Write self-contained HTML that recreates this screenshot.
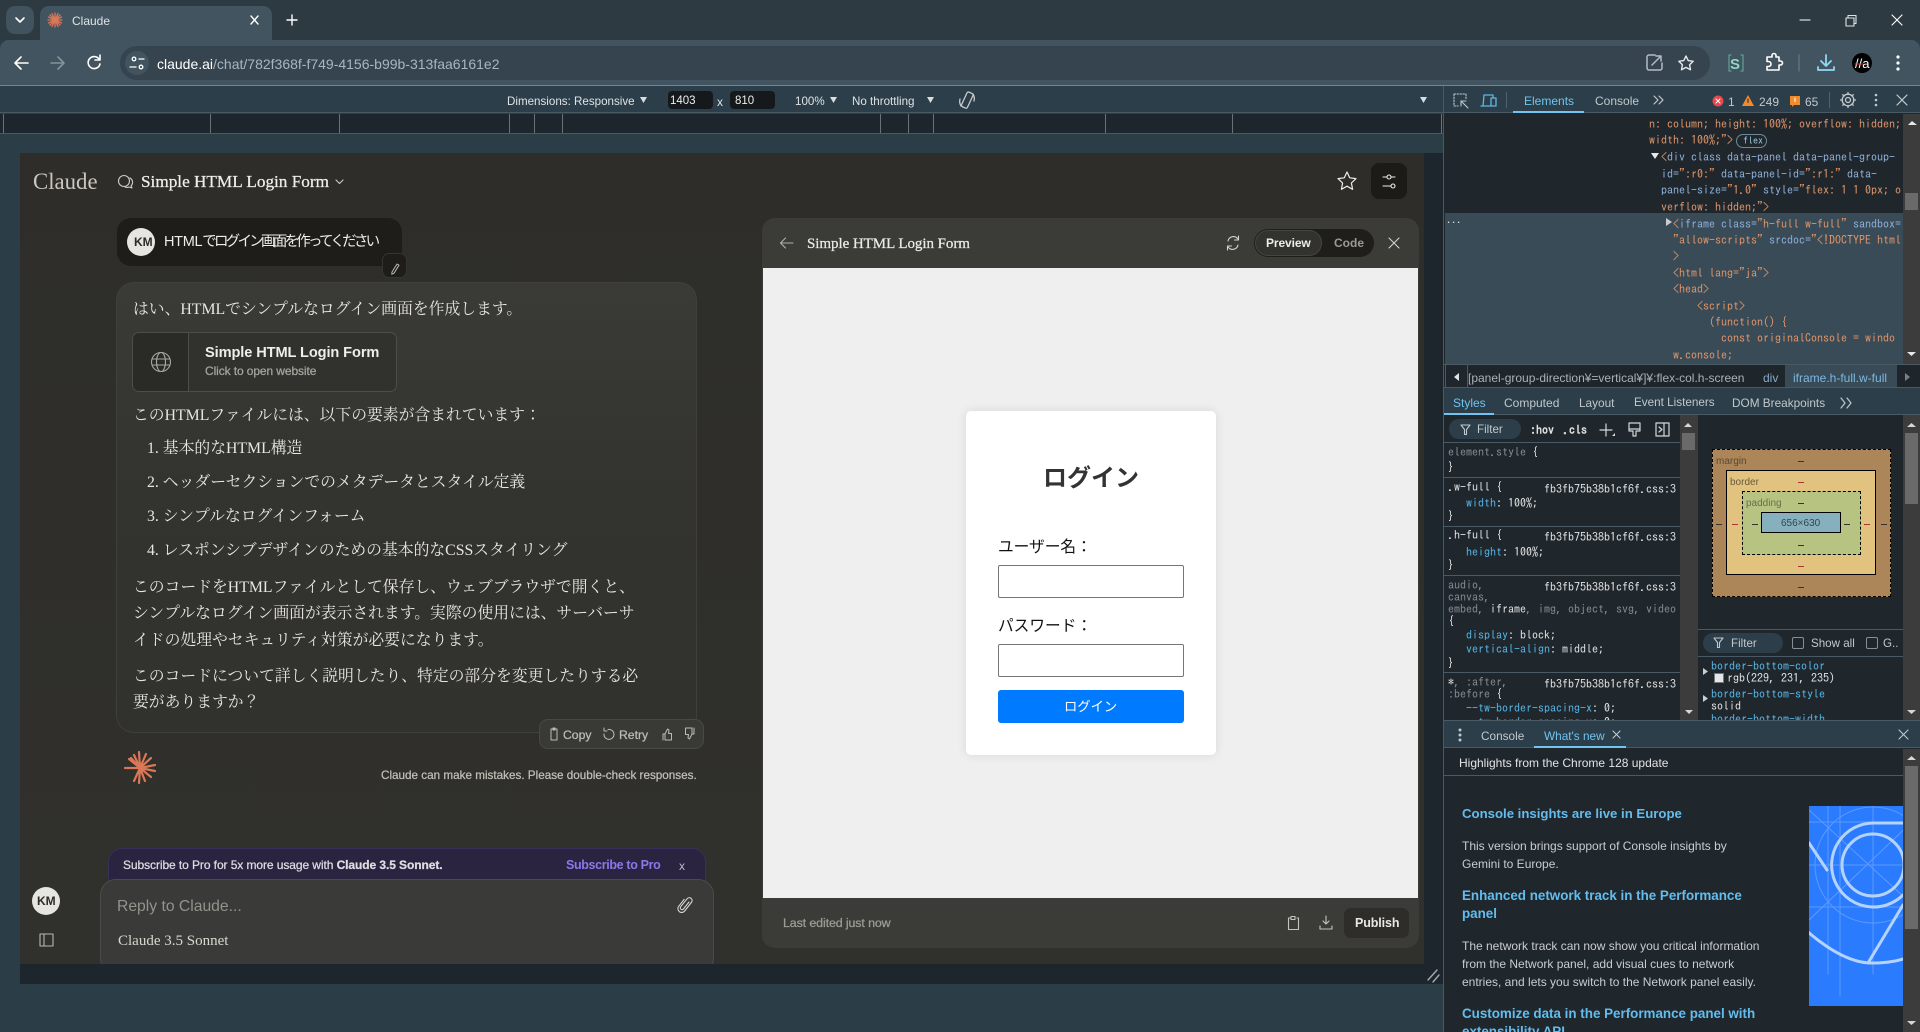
<!DOCTYPE html>
<html lang="ja"><head><meta charset="utf-8"><title>Claude</title>
<style>
html,body{margin:0;padding:0;width:1920px;height:1032px;overflow:hidden;background:#2b3d47}
body{position:relative;font-family:"Liberation Sans","Noto Sans CJK JP",sans-serif;color:#ddd}
.b{position:absolute;box-sizing:border-box}
.t{position:absolute;white-space:nowrap;line-height:0;font-size:12px;color:#dfe3e6}
.m{font-family:"IPAGothic","Liberation Mono",monospace;font-size:12px}
.o{color:#e0956a}.u{color:#8fb0dc}.g{color:#868d92}.w{color:#e4e4e4}.p{color:#56b6e8}
.s{font-family:"Liberation Serif","Noto Serif CJK SC","Noto Serif CJK JP",serif;color:#e8e6df}
.c{font-size:15.8px}
.h{font-size:13.4px;font-weight:bold;color:#62bdee}
.d{font-size:12px;color:#c9cccf}
.x{-webkit-text-stroke:.25px currentColor}
</style></head><body>

<!-- chrome -->
<div class="b" style="left:0;top:0;width:1920px;height:40px;background:#2e3a42"></div>
<div class="b" style="left:6px;top:6px;width:28px;height:28px;border-radius:9px;background:#41535e"></div>
<div class="b" style="left:40px;top:6px;width:232px;height:36px;border-radius:9px 9px 0 0;background:#42545f"></div>
<div class="t" style="left:72px;top:21px;font-size:12px">Claude</div>
<div class="b" style="left:0;top:40px;width:1920px;height:46px;background:#42545f;border-radius:9px 9px 0 0"></div>
<div class="b" style="left:0;top:85px;width:1920px;height:1px;background:#75858f"></div>
<div class="b" style="left:120px;top:46px;width:1590px;height:34px;border-radius:17px;background:#35444e"></div>
<div class="b" style="left:125px;top:51px;width:24px;height:24px;border-radius:12px;background:#42545f"></div>
<div class="t" style="left:157px;top:64px;font-size:14px;color:#a9b6be"><span style="color:#fff">claude.ai</span>/chat/782f368f-f749-4156-b99b-313faa6161e2</div>

<!-- device toolbar -->
<div class="b" style="left:0;top:86px;width:1444px;height:27px;background:#2b3e49;border-bottom:1px solid #4a5a64"></div>
<div class="t" style="left:507px;top:102px;font-size:11.6px">Dimensions: Responsive</div>
<div class="b" style="left:668px;top:91px;width:45px;height:18px;background:#15191c;border-radius:4px"></div>
<div class="t" style="left:670px;top:101px;font-size:11.5px;color:#eee">1403</div>
<div class="t" style="left:717px;top:102px;font-size:12px">x</div>
<div class="b" style="left:730px;top:91px;width:45px;height:18px;background:#15191c;border-radius:4px"></div>
<div class="t" style="left:735px;top:101px;font-size:11.5px;color:#eee">810</div>
<div class="t" style="left:795px;top:102px;font-size:11.6px">100%</div>
<div class="t" style="left:852px;top:102px;font-size:11.6px">No throttling</div>

<!-- ruler -->
<div class="b" style="left:0;top:114px;width:1443px;height:20px;background:#1e262d;border-bottom:1px solid #4a5a64"></div>
<div class="b" style="left:3px;top:114px;width:1px;height:19px;background:#6a7278"></div>
<div class="b" style="left:210px;top:114px;width:1px;height:19px;background:#6a7278"></div>
<div class="b" style="left:339px;top:114px;width:1px;height:19px;background:#6a7278"></div>
<div class="b" style="left:509px;top:114px;width:1px;height:19px;background:#6a7278"></div>
<div class="b" style="left:534px;top:114px;width:1px;height:19px;background:#6a7278"></div>
<div class="b" style="left:562px;top:114px;width:1px;height:19px;background:#6a7278"></div>
<div class="b" style="left:880px;top:114px;width:1px;height:19px;background:#6a7278"></div>
<div class="b" style="left:908px;top:114px;width:1px;height:19px;background:#6a7278"></div>
<div class="b" style="left:933px;top:114px;width:1px;height:19px;background:#6a7278"></div>
<div class="b" style="left:1105px;top:114px;width:1px;height:19px;background:#6a7278"></div>
<div class="b" style="left:1232px;top:114px;width:1px;height:19px;background:#6a7278"></div>
<div class="b" style="left:1441px;top:114px;width:1px;height:19px;background:#6a7278"></div>

<!-- emulated page gutters -->
<div class="b" style="left:1424px;top:153px;width:19px;height:831px;background:#1e262d"></div>
<div class="b" style="left:20px;top:964px;width:1423px;height:20px;background:#1e262d"></div>
<div class="b" style="left:709px;top:974px;width:26px;height:2px;background:#a7abae"></div>
<div class="b" style="left:709px;top:978px;width:26px;height:2px;background:#a7abae"></div>

<!-- Claude page -->
<div class="b" style="left:20px;top:153px;width:1404px;height:811px;background:linear-gradient(#2e2d29,#30302c)"></div>
<div class="t s" style="left:33px;top:182px;font-size:22.8px;color:#c9c7bf">Claude</div>
<div class="t s x" style="left:141px;top:182px;font-size:17.2px;color:#efeee9">Simple HTML Login Form</div>
<div class="b" style="left:1371px;top:163px;width:36px;height:36px;border-radius:8px;background:#1c1b17"></div>

<!-- user bubble -->
<div class="b" style="left:117px;top:218px;width:285px;height:48px;border-radius:14px;background:#1e1d19"></div>
<div class="b" style="left:127px;top:228px;width:28px;height:28px;border-radius:14px;background:#e6e5df"></div>
<div class="t" style="left:134px;top:242px;font-size:12px;font-weight:bold;color:#2b2b28">KM</div>
<div class="t" style="left:164px;top:242px;font-size:14.5px;letter-spacing:-2.75px;color:#eeede8"><span style="letter-spacing:-.3px">HTML</span>でログイン画面を作ってください</div>
<div class="b" style="left:382px;top:253px;width:25px;height:25px;border-radius:7px;background:#1e1d19;border:1px solid #35342f"></div>

<!-- assistant bubble -->
<div class="b" style="left:116px;top:282px;width:581px;height:451px;border-radius:18px;background:linear-gradient(#3a3a37,#33332f 45%,#31312d);border:1px solid #3f3f3b"></div>
<div class="t s c" style="left:133px;top:310px">はい、HTMLでシンプルなログイン画面を作成します。</div>
<div class="b" style="left:132px;top:332px;width:265px;height:60px;border-radius:7px;background:#31312d;border:1px solid #4e4e49"></div>
<div class="b" style="left:133px;top:333px;width:56px;height:58px;border-radius:6px 0 0 6px;background:#2a2a26;border-right:1px solid #4e4e49"></div>
<div class="t" style="left:205px;top:353px;font-size:14.6px;font-weight:bold;letter-spacing:-.1px;color:#efeee9">Simple HTML Login Form</div>
<div class="t x" style="left:205px;top:371px;font-size:12px;letter-spacing:-.1px;color:#a6a59d">Click to open website</div>
<div class="t s c" style="left:133px;top:416px">このHTMLファイルには、以下の要素が含まれています：</div>
<div class="t s c" style="left:147px;top:449px">1. 基本的なHTML構造</div>
<div class="t s c" style="left:147px;top:483px">2. ヘッダーセクションでのメタデータとスタイル定義</div>
<div class="t s c" style="left:147px;top:517px">3. シンプルなログインフォーム</div>
<div class="t s c" style="left:147px;top:551px">4. レスポンシブデザインのための基本的なCSSスタイリング</div>
<div class="t s c" style="left:133px;top:588px">このコードをHTMLファイルとして保存し、ウェブブラウザで開くと、</div>
<div class="t s c" style="left:133px;top:614px">シンプルなログイン画面が表示されます。実際の使用には、サーバーサ</div>
<div class="t s c" style="left:133px;top:641px">イドの処理やセキュリティ対策が必要になります。</div>
<div class="t s c" style="left:133px;top:677px">このコードについて詳しく説明したり、特定の部分を変更したりする必</div>
<div class="t s c" style="left:133px;top:703px">要がありますか？</div>

<!-- copy bar -->
<div class="b" style="left:539px;top:719px;width:165px;height:30px;border-radius:9px;background:#393936;border:1px solid #484844"></div>
<div class="t x" style="left:563px;top:735px;font-size:12.2px;color:#bdbcb4">Copy</div>
<div class="t x" style="left:619px;top:735px;font-size:12.2px;color:#bdbcb4">Retry</div>
<div class="t x" style="left:381px;top:776px;font-size:11.7px;color:#c0bfb7">Claude can make mistakes. Please double-check responses.</div>

<!-- subscribe -->
<div class="b" style="left:108px;top:848px;width:598px;height:50px;border-radius:14px 14px 0 0;background:#2a2441;border:1px solid #37315a"></div>
<div class="t x" style="left:123px;top:865px;font-size:12px;letter-spacing:-.08px;color:#dedde2">Subscribe to Pro for 5x more usage with <b>Claude 3.5 Sonnet.</b></div>
<div class="t" style="left:566px;top:865px;font-size:12.5px;font-weight:bold;letter-spacing:-.35px;color:#8a78ea">Subscribe to Pro</div>
<div class="t" style="left:679px;top:866px;font-size:12px;color:#bdbcc5">x</div>

<!-- input -->
<div class="b" style="left:100px;top:879px;width:614px;height:95px;border-radius:16px;background:#3a3a38;border:1px solid #4b4b47"></div>
<div class="b" style="left:20px;top:964px;width:1404px;height:20px;background:#1e262d"></div>
<div class="t" style="left:117px;top:907px;font-size:15.7px;color:#93938c">Reply to Claude...</div>
<div class="t s" style="left:118px;top:941px;font-size:15px;color:#d8d7cf">Claude 3.5 Sonnet</div>
<div class="b" style="left:32px;top:887px;width:28px;height:28px;border-radius:14px;background:#e6e5df"></div>
<div class="t" style="left:37px;top:901px;font-size:12px;font-weight:bold;color:#2b2b28">KM</div>

<!-- artifact panel -->
<div class="b" style="left:762px;top:218px;width:657px;height:730px;border-radius:13px;background:#3b3b38"></div>
<div class="b" style="left:763px;top:268px;width:655px;height:630px;background:#efefef"></div>
<div class="t s x" style="left:807px;top:244px;font-size:15px;letter-spacing:-.05px;color:#ecebe5">Simple HTML Login Form</div>
<div class="b" style="left:1254px;top:229px;width:120px;height:28px;border-radius:14px;background:#1f1e1a"></div>
<div class="b" style="left:1255px;top:230px;width:67px;height:26px;border-radius:13px;background:#32322e;border:1px solid #45453f"></div>
<div class="t" style="left:1266px;top:243px;font-size:12px;font-weight:bold;letter-spacing:-.1px;color:#eeede7">Preview</div>
<div class="t" style="left:1334px;top:243px;font-size:12px;font-weight:bold;color:#9b9a92">Code</div>
<div class="t x" style="left:783px;top:923px;font-size:12.4px;color:#9e9d95;letter-spacing:-.1px">Last edited just now</div>
<div class="b" style="left:1344px;top:908px;width:65px;height:30px;border-radius:7px;background:#2e2d2a"></div>
<div class="t" style="left:1355px;top:923px;font-size:12.5px;font-weight:bold;color:#e9e8e2;letter-spacing:-.1px">Publish</div>

<!-- login -->
<div class="b" style="left:966px;top:411px;width:250px;height:344px;border-radius:5px;background:#fff;box-shadow:0 0 10px rgba(0,0,0,.1)"></div>
<div class="t" style="left:1043px;top:479px;font-size:24px;font-weight:bold;color:#333">ログイン</div>
<div class="t" style="left:998px;top:548px;font-size:15.7px;color:#111">ユーザー名：</div>
<div class="b" style="left:998px;top:565px;width:186px;height:33px;border:1px solid #767676;border-radius:2px;background:#fff"></div>
<div class="t" style="left:998px;top:627px;font-size:15.7px;color:#111">パスワード：</div>
<div class="b" style="left:998px;top:644px;width:186px;height:33px;border:1px solid #767676;border-radius:2px;background:#fff"></div>
<div class="b" style="left:998px;top:690px;width:186px;height:33px;border-radius:3px;background:#007bff"></div>
<div class="t" style="left:1064px;top:707px;font-size:13.3px;color:#fff">ログイン</div>

<!-- devtools frame -->
<div class="b" style="left:1443px;top:86px;width:477px;height:946px;background:#20272c;border-left:1px solid #4a5a64"></div>
<div class="b" style="left:1444px;top:86px;width:476px;height:27px;background:#2b3e49;border-bottom:1px solid #4a5a64"></div>
<div class="b" style="left:1506px;top:92px;width:1px;height:16px;background:#52616b"></div>
<div class="b" style="left:1829px;top:92px;width:1px;height:16px;background:#52616b"></div>
<div class="t" style="left:1524px;top:101px;font-size:12px;color:#70c4ef">Elements</div>
<div class="b" style="left:1513px;top:111px;width:71px;height:2px;background:#70c4ef"></div>
<div class="t" style="left:1595px;top:101px;font-size:12px;color:#c2c8cc">Console</div>
<div class="t" style="left:1728px;top:102px;font-size:12px;color:#c2c8cc">1</div>
<div class="t" style="left:1759px;top:102px;font-size:12px;color:#c2c8cc">249</div>
<div class="t" style="left:1805px;top:102px;font-size:12px;color:#c2c8cc">65</div>

<!-- elements tree -->
<div class="b" style="left:1445px;top:213px;width:458px;height:151px;background:#394b56"></div>
<div class="b" style="left:1903px;top:114px;width:17px;height:251px;background:#3c3c3c"></div>
<div class="b" style="left:1905px;top:193px;width:13px;height:17px;background:#6a6a6a"></div>
<div class="t m o" style="left:1649px;top:124px">n: column; height: 100%; overflow: hidden;</div>
<div class="t m o" style="left:1649px;top:140px">width: 100%;"&gt;</div>
<div class="b" style="left:1736px;top:134px;width:31px;height:14px;border:1px solid #6e8a99;border-radius:7px"></div>
<div class="t m" style="left:1743px;top:141px;font-size:10px;color:#9fc5dc">flex</div>
<div class="t m u" style="left:1661px;top:157px"><span class="o">&lt;</span>div class data-panel data-panel-group-</div>
<div class="t m u" style="left:1661px;top:174px">id=<span class="o">":r0:"</span> data-panel-id=<span class="o">":r1:"</span> data-</div>
<div class="t m u" style="left:1661px;top:190px">panel-size=<span class="o">"1.0"</span> style=<span class="o">"flex: 1 1 0px; o</span></div>
<div class="t m o" style="left:1661px;top:207px">verflow: hidden;"&gt;</div>
<div class="t m" style="left:1447px;top:220px;color:#ddd;font-size:10px">...</div>
<div class="t m u" style="left:1673px;top:224px"><span class="o">&lt;</span>iframe class=<span class="o">"h-full w-full"</span> sandbox=</div>
<div class="t m o" style="left:1673px;top:240px">"allow-scripts" <span class="u">srcdoc=</span>"&lt;!DOCTYPE html</div>
<div class="t m o" style="left:1673px;top:256px">&gt;</div>
<div class="t m o" style="left:1673px;top:273px">&lt;html lang="ja"&gt;</div>
<div class="t m o" style="left:1673px;top:289px">&lt;head&gt;</div>
<div class="t m o" style="left:1697px;top:306px">&lt;script&gt;</div>
<div class="t m o" style="left:1709px;top:322px">(function() {</div>
<div class="t m o" style="left:1721px;top:338px">const originalConsole = windo</div>
<div class="t m o" style="left:1673px;top:355px">w.console;</div>

<!-- breadcrumb -->
<div class="b" style="left:1444px;top:364px;width:476px;height:24px;background:#1f262b;border-top:1px solid #4a5a64;border-bottom:1px solid #4a5a64"></div>
<div class="b" style="left:1445px;top:365px;width:23px;height:22px;background:#20272c;border-right:1px solid #4a5a64;border-left:1px solid #4a5a64"></div>
<div class="b" style="left:1785px;top:365px;width:112px;height:22px;background:#394b56"></div>
<div class="t" style="left:1468px;top:378px;font-size:12px;color:#aab2b7">[panel-group-direction¥=vertical¥]¥:flex-col.h-screen</div>
<div class="t" style="left:1763px;top:378px;font-size:12px;color:#86a9cc">div</div>
<div class="t" style="left:1793px;top:378px;font-size:12px;color:#7cb8e4">iframe.h-full.w-full</div>

<!-- styles tabs -->
<div class="b" style="left:1444px;top:388px;width:476px;height:27px;background:#2b3e49;border-bottom:1px solid #4a5a64"></div>
<div class="t" style="left:1453px;top:403px;color:#70c4ef;font-size:12px">Styles</div>
<div class="b" style="left:1444px;top:413px;width:50px;height:2px;background:#70c4ef"></div>
<div class="t" style="left:1504px;top:403px;font-size:12px;color:#c2c8cc">Computed</div>
<div class="t" style="left:1579px;top:403px;font-size:11.8px;color:#c2c8cc">Layout</div>
<div class="t" style="left:1634px;top:403px;font-size:11.7px;color:#c2c8cc">Event Listeners</div>
<div class="t" style="left:1732px;top:403px;font-size:11.8px;color:#c2c8cc">DOM Breakpoints</div>

<!-- filter -->
<div class="b" style="left:1449px;top:419px;width:72px;height:20px;border-radius:10px;background:#2b3e49"></div>
<div class="t" style="left:1477px;top:430px;font-size:11.6px;color:#c2c8cc">Filter</div>
<div class="t m" style="left:1530px;top:430px;color:#e0e0e0;font-weight:bold">:hov</div>
<div class="t m" style="left:1563px;top:430px;color:#e0e0e0;font-weight:bold">.cls</div>

<!-- styles pane -->
<div class="b" style="left:0;top:0;width:1698px;height:720px;overflow:hidden">
<div class="b" style="left:1444px;top:442px;width:236px;height:1px;background:#4a5a64"></div>
<div class="b" style="left:1444px;top:477px;width:236px;height:1px;background:#4a5a64"></div>
<div class="b" style="left:1444px;top:526px;width:236px;height:1px;background:#4a5a64"></div>
<div class="b" style="left:1444px;top:575px;width:236px;height:1px;background:#4a5a64"></div>
<div class="b" style="left:1444px;top:672px;width:236px;height:1px;background:#4a5a64"></div>
<div class="t m g" style="left:1448px;top:452px">element.style <span class="w">{</span></div>
<div class="t m w" style="left:1448px;top:467px">}</div>
<div class="t m w" style="left:1448px;top:487px">.w-full {</div>
<div class="t m w" style="left:1544px;top:489px">fb3fb75b38b1cf6f.css:3</div>
<div class="t m p" style="left:1466px;top:503px">width<span class="w">: 100%;</span></div>
<div class="t m w" style="left:1448px;top:516px">}</div>
<div class="t m w" style="left:1448px;top:535px">.h-full {</div>
<div class="t m w" style="left:1544px;top:537px">fb3fb75b38b1cf6f.css:3</div>
<div class="t m p" style="left:1466px;top:552px">height<span class="w">: 100%;</span></div>
<div class="t m w" style="left:1448px;top:565px">}</div>
<div class="t m g" style="left:1448px;top:585px">audio,</div>
<div class="t m w" style="left:1544px;top:587px">fb3fb75b38b1cf6f.css:3</div>
<div class="t m g" style="left:1448px;top:597px">canvas,</div>
<div class="t m g" style="left:1448px;top:609px">embed, <span class="w">iframe</span>, img, object, svg, video</div>
<div class="t m w" style="left:1448px;top:621px">{</div>
<div class="t m p" style="left:1466px;top:635px">display<span class="w">: block;</span></div>
<div class="t m p" style="left:1466px;top:649px">vertical-align<span class="w">: middle;</span></div>
<div class="t m w" style="left:1448px;top:663px">}</div>
<div class="t m g" style="left:1448px;top:682px"><span class="w">*</span>, :after,</div>
<div class="t m w" style="left:1544px;top:684px">fb3fb75b38b1cf6f.css:3</div>
<div class="t m g" style="left:1448px;top:694px">:before <span class="w">{</span></div>
<div class="t m p" style="left:1466px;top:708px">--tw-border-spacing-x<span class="w">: 0;</span></div>
<div class="t m p" style="left:1466px;top:722px">--tw-border-spacing-y<span class="w">: 0;</span></div>
</div>

<div class="b" style="left:1680px;top:415px;width:18px;height:305px;background:#3c3c3c"></div>
<div class="b" style="left:1682px;top:433px;width:13px;height:17px;background:#6a6a6a"></div>
<div class="b" style="left:1698px;top:415px;width:205px;height:305px;background:#20272c"></div>
<div class="b" style="left:1903px;top:415px;width:17px;height:305px;background:#3c3c3c"></div>
<div class="b" style="left:1905px;top:433px;width:13px;height:71px;background:#6a6a6a"></div>

<!-- box model -->
<div class="b" style="left:1712px;top:449px;width:179px;height:148px;background:#ac8558;border:1px dashed #000"></div>
<div class="b" style="left:1726px;top:470px;width:150px;height:105px;background:#e2c27f;border:1px solid #000"></div>
<div class="b" style="left:1742px;top:491px;width:119px;height:64px;background:#b6c381;border:1px dashed #000"></div>
<div class="b" style="left:1761px;top:512px;width:80px;height:21px;background:#87b0bf;border:1px solid #000"></div>
<div class="t" style="left:1716px;top:462px;font-size:10px;color:#5b4a33">margin</div>
<div class="t" style="left:1730px;top:483px;font-size:10px;color:#6a5a3a">border</div>
<div class="t" style="left:1746px;top:504px;font-size:10px;color:#66704a">padding</div>
<div class="t" style="left:1781px;top:524px;font-size:10px;color:#33454d">656×630</div>
<div class="b" style="left:1798px;top:461px;width:6px;height:1px;background:#333"></div>
<div class="b" style="left:1798px;top:482px;width:6px;height:1px;background:#a33"></div>
<div class="b" style="left:1798px;top:503px;width:6px;height:1px;background:#333"></div>
<div class="b" style="left:1798px;top:545px;width:6px;height:1px;background:#333"></div>
<div class="b" style="left:1798px;top:566px;width:6px;height:1px;background:#a33"></div>
<div class="b" style="left:1798px;top:587px;width:6px;height:1px;background:#333"></div>
<div class="b" style="left:1716px;top:524px;width:6px;height:1px;background:#333"></div>
<div class="b" style="left:1732px;top:524px;width:6px;height:1px;background:#a33"></div>
<div class="b" style="left:1752px;top:524px;width:6px;height:1px;background:#333"></div>
<div class="b" style="left:1844px;top:524px;width:6px;height:1px;background:#333"></div>
<div class="b" style="left:1864px;top:524px;width:6px;height:1px;background:#a33"></div>
<div class="b" style="left:1881px;top:524px;width:6px;height:1px;background:#333"></div>

<!-- computed -->
<div class="b" style="left:1698px;top:629px;width:205px;height:1px;background:#4a5a64"></div>
<div class="b" style="left:1698px;top:656px;width:205px;height:1px;background:#4a5a64"></div>
<div class="b" style="left:1703px;top:633px;width:80px;height:20px;border-radius:10px;background:#2b3e49"></div>
<div class="t" style="left:1731px;top:644px;font-size:11.6px;color:#c2c8cc">Filter</div>
<div class="b" style="left:1792px;top:637px;width:12px;height:12px;border:1px solid #8a8f93;border-radius:2px"></div>
<div class="t" style="left:1811px;top:644px;font-size:11.6px;color:#c2c8cc">Show all</div>
<div class="b" style="left:1866px;top:637px;width:12px;height:12px;border:1px solid #8a8f93;border-radius:2px"></div>
<div class="t" style="left:1883px;top:644px;font-size:11.6px;color:#c2c8cc">G..</div>
<div class="b" style="left:1698px;top:657px;width:205px;height:63px;overflow:hidden">
<div class="t m p" style="left:13px;top:9px">border-bottom-color</div>
<div class="b" style="left:16px;top:16px;width:10px;height:10px;background:#e5e7eb;border:1px solid #777"></div>
<div class="t m w" style="left:29px;top:21px">rgb(229, 231, 235)</div>
<div class="t m p" style="left:13px;top:37px">border-bottom-style</div>
<div class="t m w" style="left:13px;top:49px">solid</div>
<div class="t m p" style="left:13px;top:62px">border-bottom-width</div>
</div>

<!-- drawer -->
<div class="b" style="left:1444px;top:720px;width:476px;height:28px;background:#2b3e49;border-top:1px solid #4a5a64;border-bottom:1px solid #4a5a64"></div>
<div class="t" style="left:1481px;top:736px;font-size:11.8px;color:#c2c8cc">Console</div>
<div class="t" style="left:1544px;top:736px;font-size:11.8px;color:#70c4ef">What's new</div>
<div class="b" style="left:1534px;top:746px;width:92px;height:2px;background:#70c4ef"></div>
<div class="t" style="left:1459px;top:763px;font-size:12px;color:#e2e4e6">Highlights from the Chrome 128 update</div>
<div class="b" style="left:1444px;top:775px;width:459px;height:1px;background:#4a5a64"></div>
<div class="b" style="left:1903px;top:749px;width:17px;height:283px;background:#3c3c3c"></div>
<div class="b" style="left:1905px;top:766px;width:13px;height:163px;background:#6a6a6a"></div>
<div class="t h" style="left:1462px;top:814px;font-size:13.2px">Console insights are live in Europe</div>
<div class="t d" style="left:1462px;top:846px">This version brings support of Console insights by</div>
<div class="t d" style="left:1462px;top:864px">Gemini to Europe.</div>
<div class="t h" style="left:1462px;top:896px">Enhanced network track in the Performance</div>
<div class="t h" style="left:1462px;top:914px">panel</div>
<div class="t d" style="left:1462px;top:946px">The network track can now show you critical information</div>
<div class="t d" style="left:1462px;top:964px">from the Network panel, add visual cues to network</div>
<div class="t d" style="left:1462px;top:982px">entries, and lets you switch to the Network panel easily.</div>
<div class="t h" style="left:1462px;top:1014px">Customize data in the Performance panel with</div>
<div class="t h" style="left:1462px;top:1032px">extensibility API</div>

<!-- icons overlay -->
<svg class="b" style="left:0;top:0" width="1920" height="1032" viewBox="0 0 1920 1032" fill="none" stroke-linecap="round" stroke-linejoin="round">
<defs><clipPath id="ic"><rect x="1809" y="806" width="94" height="200"/></clipPath></defs>
<!-- tab -->
<path d="M16 18l4 4 4-4" stroke="#fff" stroke-width="1.6"/>
<g stroke="#d97757" stroke-width="1.3"><path d="M55 13v14M48 20h14M50 15l10 10M60 15l-10 10M52 13.5l6 13M58 13.5l-6 13M48.5 17l13 6M61.5 17l-13 6"/></g>
<path d="M251 16l7 8M258 16l-7 8M292 15v10M287 20h10" stroke="#fff" stroke-width="1.4"/>
<path d="M1800 20h10" stroke="#fff" stroke-width="1.1"/>
<path d="M1846 18h8v8h-8zM1848 18v-2.5h8v8h-2" stroke="#dfe3e6" stroke-width="1.1"/>
<path d="M1892 15l10 10M1902 15l-10 10" stroke="#fff" stroke-width="1.1"/>
<!-- toolbar -->
<path d="M28 63H16M21 57l-6 6 6 6" stroke="#fff" stroke-width="1.6"/>
<path d="M51 63h12M58 57l6 6-6 6" stroke="#84939c" stroke-width="1.6"/>
<path d="M99 59a6 6 0 1 0 1 5M100 55v5h-5" stroke="#fff" stroke-width="1.6"/>
<g stroke="#fff" stroke-width="1.3"><circle cx="134" cy="59" r="1.8"/><path d="M139 59h5M130 67h6"/><circle cx="141" cy="67" r="1.8"/></g>
<path d="M1655 55h-6a2 2 0 0 0-2 2v11a2 2 0 0 0 2 2h11a2 2 0 0 0 2-2v-5M1652 65l9-9M1656 56h5v5" stroke="#b4bcc1" stroke-width="1.5"/>
<path d="M1686 56l2.2 4.6 5 .7-3.6 3.5.9 5-4.5-2.4-4.5 2.4.9-5-3.6-3.5 5-.7z" stroke="#e6e9eb" stroke-width="1.4"/>
<path d="M1731 55h-2v16h2M1741 55h2v16h-2" stroke="#5d9c95" stroke-width="1.3"/>
<text x="1730" y="69" font-family="Liberation Sans" font-size="15" font-weight="bold" fill="#8fd6c9">S</text>
<path d="M1767 57h5v-1.500a2 2 0 0 1 4 0V57h3v4h1.500a2 2 0 0 1 0 4H1779v5h-12v-3.500h1.500a2.500 2.500 0 0 0 0-5H1767z" stroke="#fff" stroke-width="1.6"/>
<path d="M1799 55v16" stroke="#667680" stroke-width="1.3"/>
<path d="M1826 55v10M1821 61l5 5 5-5M1818 67v3h16v-3" stroke="#8fd8f5" stroke-width="1.8"/>
<circle cx="1862" cy="63" r="10" fill="#000"/>
<text x="1855" y="68" font-family="Liberation Sans" font-size="13" fill="#fff">//a</text>
<path d="M1855 64h8" stroke="#d33" stroke-width="1"/>
<g fill="#fff"><circle cx="1898" cy="57" r="1.6"/><circle cx="1898" cy="63" r="1.6"/><circle cx="1898" cy="69" r="1.6"/></g>
<!-- device bar -->
<g fill="#d8dde0"><path d="M640 97h7l-3.500 6zM830 97h7l-3.500 6zM927 97h7l-3.500 6zM1420 97h7l-3.500 6z"/></g>
<g stroke="#c6cccf" stroke-width="1.300"><rect x="964" y="92" width="6.500" height="16" rx="1.500" transform="rotate(25 967 100)"/><path d="M961 106a9 9 0 0 1-1-7M973 94a9 9 0 0 1 1 7"/></g>
<!-- resize handle -->
<path d="M1428 980l9-10M1433 982l6-7" stroke="#a7abae" stroke-width="1.400"/>
<!-- claude header icons -->
<g stroke="#cfcec6" stroke-width="1.100"><circle cx="124" cy="181" r="5.500"/><path d="M130 178a5 5 0 0 1 1 8l1 2-3-1a5 5 0 0 1-4 0"/></g>
<path d="M336 180l3.500 3.500 3.500-3.500" stroke="#cfcec6" stroke-width="1.100"/>
<path d="M1347 172l2.700 5.800 6.300.8-4.600 4.400 1.200 6.300-5.600-3.100-5.600 3.100 1.200-6.300-4.600-4.400 6.300-.8z" stroke="#efeee8" stroke-width="1.200"/>
<g stroke="#efeee8" stroke-width="1.100"><path d="M1383 177h4M1395 177h-4M1383 186h8M1395 186h0"/><circle cx="1389" cy="177" r="2"/><circle cx="1393" cy="186" r="2"/></g>
<path d="M392 272l5-8 2 1.200-5 8-2.200 1z" stroke="#bab9b1" stroke-width="1"/>
<g stroke="#a8a79f" stroke-width="1.100"><circle cx="161" cy="362" r="9.500"/><ellipse cx="161" cy="362" rx="4.500" ry="9.500"/><path d="M152 359h18M152 365h18"/></g>
<!-- copy bar icons -->
<g stroke="#bdbcb4" stroke-width="1"><path d="M551 729h6v11h-6zM553 728h2v2h-2z"/><path d="M608 729.500a5 5 0 1 1-4 4.500M604 728v3h3"/><path d="M663 734h2l2.500-5 1.500 1-.500 3.500h3v6.500h-6.500v-6zM663 734v6"/><path d="M694 734h-2l-2.500 5-1.500-1 .500-3.500h-3V728h6.500v6zM694 734v-6"/></g>
<!-- asterisk -->
<g stroke="#d97757" stroke-width="2.200"><path d="M140 768l-1-16M140 768l6-14M140 768l11-10M140 768l15-3M140 768l15 3M140 768l11 9M140 768l5 13M140 768l-1 15M140 768l-6 13M140 768l-9-10M140 768h-15M140 768l-11-9M140 768l-6-13"/></g>
<path d="M689 902l-5.500 7a1.800 1.800 0 0 1-2.800-2.300l6.500-8a2.800 2.800 0 0 1 4.500 3.300l-7 9a3.800 3.800 0 0 1-6-4.700l5.500-7" stroke="#d9d8d1" stroke-width="1.100"/>
<path d="M40 934h13v12H40zM44 934v12" stroke="#b8b7af" stroke-width="1.100"/>
<!-- artifact icons -->
<path d="M793 243h-12M785.500 238l-5 5 5 5" stroke="#b0afa8" stroke-width="1.100"/>
<path d="M1228 241a5.500 5.500 0 0 1 9.500-2.500l1 1M1238.500 236v4h-4M1238 245a5.500 5.500 0 0 1-9.500 2.500l-1-1M1227.500 250v-4h4" stroke="#d4d3cb" stroke-width="1.100"/>
<path d="M1389 238l10 10M1399 238l-10 10" stroke="#d4d3cb" stroke-width="1.100"/>
<path d="M1290 918h-1.500v11.500h10V918h-1.500M1291 916.500h4v3h-4z" stroke="#c6c5bd" stroke-width="1.100"/>
<path d="M1326 916v8M1323 921l3 3 3-3M1320 926v3h12v-3" stroke="#c6c5bd" stroke-width="1.100"/>
<!-- breadcrumbs arrows -->
<g fill="#dfe3e6"><path d="M1459 373v8l-5-4z"/><path d="M1905 373v8l5-4z" fill="#7a8287"/></g>
<!-- devtools icons -->
<g stroke="#c2c8cc" stroke-width="1.100"><path d="M1454 94h12M1454 94v12M1466 94v5M1454 106h4" stroke-dasharray="1.500 1.500"/><path d="M1461 101h5M1461 101v5M1461 101l7 7"/></g>
<path d="M1481 106h15M1483 106l1-11h9v3M1491 98h5v8h-5z" stroke="#5fb8e4" stroke-width="1.300"/>
<path d="M1654 96l4 4-4 4M1659 96l4 4-4 4" stroke="#c2c8cc" stroke-width="1.200"/>
<circle cx="1718" cy="101" r="5.500" fill="#e5484d"/><path d="M1716 99l4 4M1720 99l-4 4" stroke="#fff" stroke-width="1"/>
<path d="M1748 95l6 11h-12z" fill="#f28b2c"/><path d="M1748 99v3.500" stroke="#222" stroke-width="1"/>
<path d="M1790 96h10v9h-6l-2 2v-2h-2z" fill="#f28b2c"/><path d="M1795 98v3.500" stroke="#fff" stroke-width="1.100"/>
<g stroke="#c2c8cc" stroke-width="1.300"><circle cx="1848" cy="100" r="2.500"/><circle cx="1848" cy="100" r="5.800"/><path d="M1848 92.500v2M1848 105.500v2M1840.500 100h2M1853.500 100h2M1842.700 94.700l1.400 1.400M1851.900 103.900l1.400 1.400M1842.700 105.300l1.400-1.400M1851.900 96.100l1.400-1.400"/></g>
<g fill="#c2c8cc"><circle cx="1876" cy="95" r="1.300"/><circle cx="1876" cy="100" r="1.300"/><circle cx="1876" cy="105" r="1.300"/></g>
<path d="M1897 95l10 10M1907 95l-10 10" stroke="#c2c8cc" stroke-width="1.200"/>
<!-- tree arrows -->
<g fill="#e8e8e8"><path d="M1651 153h8l-4 6zM1908 125l4-4 5 4z"/><path d="M1666 218l6 4-6 4z" fill="#c8ced2"/><path d="M1907 352h9l-4.500 4z"/></g>
<!-- styles tabs chevrons -->
<path d="M1841 398l4 5-4 5M1847 398l4 5-4 5" stroke="#c2c8cc" stroke-width="1.200"/>
<!-- filter funnels -->
<path d="M1461 425h9l-3.500 4.500v5h-2v-5z" stroke="#c2c8cc" stroke-width="1.100"/>
<path d="M1714 638h9l-3.500 4.500v5h-2v-5z" stroke="#c2c8cc" stroke-width="1.100"/>
<g stroke="#d3d7da" stroke-width="1.200"><path d="M1600 430h12M1606 424v12"/><path d="M1629 423h11v6h-11zM1629 429h11v2h-4v5h-3v-5h-4z"/><path d="M1656 423h13v13h-13zM1664 423v13M1659 427l3 2.500-3 2.500"/></g>
<path d="M1612 436l3-3v3z" fill="#d3d7da"/>
<!-- scrollbars arrows -->
<g fill="#d6d6d6"><path d="M1684 427l4-4 4 4z"/><path d="M1907 427l4.500-4 4.500 4z"/><path d="M1685 710h8l-4 4z"/><path d="M1907 710h9l-4.500 4z"/><path d="M1907 760l4.500-4 4.500 4z"/><path d="M1907 1021h9l-4.500 4z"/></g>
<g fill="#c8ced2"><path d="M1703 668l5 3.500-5 3.500z"/><path d="M1703 695l5 3.500-5 3.500z"/></g>
<!-- drawer icons -->
<g fill="#c2c8cc"><circle cx="1460" cy="730" r="1.500"/><circle cx="1460" cy="735" r="1.500"/><circle cx="1460" cy="740" r="1.500"/></g>
<path d="M1613 731l7 7M1620 731l-7 7M1899 730l9 9M1908 730l-9 9" stroke="#c2c8cc" stroke-width="1.100"/>
<!-- image -->
<g clip-path="url(#ic)">
<rect x="1809" y="806" width="94" height="200" fill="#2b7bff"/>
<g stroke="#7eb0ff" stroke-width="1" opacity=".6"><path d="M1809 822h94M1809 865h94M1809 907h94M1828 806v168M1840 806v190M1873 806v168M1809 810l120 110M1935 800l-126 120"/><circle cx="1873" cy="865" r="58"/></g>
<g stroke="#b5d3ff" stroke-width="3"><circle cx="1873" cy="865" r="31"/><path d="M1903 823h-30a42 42 0 1 0 30 72"/><path d="M1809 843l18 27M1903 905l-35 58M1808 932q35 30 62 31 20 0 33-4"/></g>
</g>
</svg>
</body></html>
